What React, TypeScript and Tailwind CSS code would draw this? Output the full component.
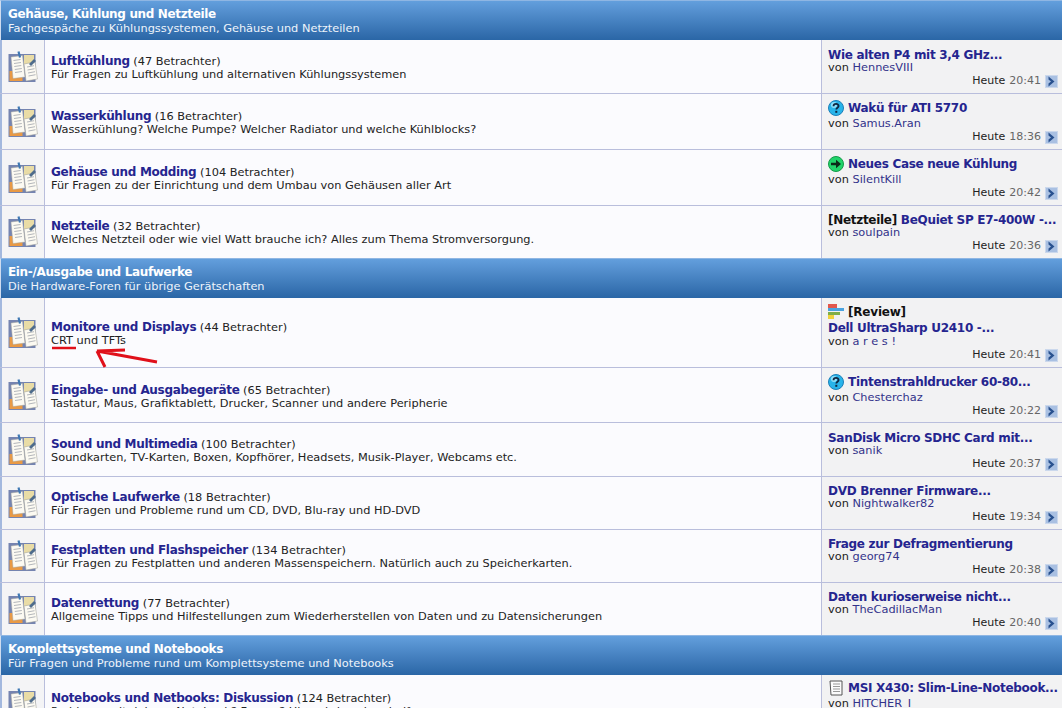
import React from 'react';

type Forum = {
  name: string;
  viewers: string;
  desc: string;
  marker?: 'question' | 'go' | 'poll' | 'doc';
  prefix?: string;
  title: string;
  by: string;
  time: string;
  height: string;
  tight?: boolean;
};

const ClipboardIcon = () => (
  <svg width="30" height="32" viewBox="0 0 30 32">
    <rect x="0.5" y="3" width="27" height="28" fill="#7584b0" />
    <rect x="1.5" y="20" width="13" height="10" fill="#e99a45" />
    <rect x="16" y="4" width="10" height="10" fill="#e9dca6" />
    <path d="M3 6L14.5 4.5L17 26L5 27.5Z" fill="#fcfaf2" stroke="#a5a59e" strokeWidth="0.5" />
    <path d="M16 13L27 11L29.5 28L18 30Z" fill="#fcfaf2" stroke="#9a9a92" strokeWidth="0.5" />
    <path d="M5.5 9.5l7-1M6 12.5l7-1M6.3 15.5l7-1M6.8 18.5l7-1M7 21.5l7-1M19 16l7-1.3M19.5 19l7-1.3M20 22l7-1.3M20.5 25l7-1.3" stroke="#b3b6bb" strokeWidth="1" />
    <path d="M10.5 0.5l1.5 6" stroke="#3f78b3" strokeWidth="2.2" />
    <path d="M21 13l5-5 2 2-5 5z" fill="#4f6c8c" />
  </svg>
);

const Marker = ({ type }: { type: Forum['marker'] }) => {
  if (type === 'question') {
    return (
      <svg width="16" height="16" viewBox="0 0 16 16" className="shrink-0">
        <circle cx="8" cy="8" r="7.5" fill="#28b4ea" stroke="#1c7fb8" />
        <circle cx="6" cy="5" r="3" fill="#8fe0fa" />
        <path d="M5.5 6.2C5.6 3.2 10.6 3.2 10.6 6C10.6 7.8 8.3 7.8 8.3 9.6" fill="none" stroke="#10253f" strokeWidth="1.8" />
        <rect x="7.3" y="10.8" width="2" height="2" fill="#10253f" />
      </svg>
    );
  }
  if (type === 'go') {
    return (
      <svg width="16" height="16" viewBox="0 0 16 16" className="shrink-0">
        <circle cx="8" cy="8" r="7.5" fill="#22d46a" stroke="#159a48" />
        <path d="M3 6.7h5V3.8L13 8l-5 4.2V9.3H3z" fill="#0b2a18" />
      </svg>
    );
  }
  if (type === 'poll') {
    return (
      <svg width="16" height="16" viewBox="0 0 16 16" className="shrink-0">
        <rect x="0" y="0" width="9" height="4" fill="#e2574c" />
        <rect x="0" y="4" width="16" height="3" fill="#4aa3df" />
        <rect x="0" y="8" width="12" height="3" fill="#7fae4a" />
        <rect x="0" y="11" width="6" height="4" fill="#f0d23c" />
      </svg>
    );
  }
  if (type === 'doc') {
    return (
      <svg width="16" height="16" viewBox="0 0 16 16" className="shrink-0">
        <path d="M2 1h12v14H3z" fill="#fbfbfb" stroke="#555" />
        <path d="M5 4h7M5 6.5h7M5 9h7M5 11.5h7" stroke="#999" />
      </svg>
    );
  }
  return null;
};

const GoButton = () => (
  <svg width="13" height="13" viewBox="0 0 13 13" className="ml-[4px] mt-[1px] shrink-0">
    <rect width="13" height="13" fill="#a9c0e2" />
    <rect x="0.5" y="0.5" width="12" height="12" fill="none" stroke="#cbd8ec" />
    <path d="M3.5 1.5L9.5 6.5L3.5 11.5V8.5L6 6.5L3.5 4.5Z" fill="#29518f" />
  </svg>
);

const Category = ({ title, sub }: { title: string; sub: string }) => (
  <div className="h-[40px] border-t border-t-[#8fb6e3] border-l border-l-[#cfdcef] bg-gradient-to-b from-[#639fdd] to-[#2a66a6] pl-[7px] pt-[6px] text-white">
    <div className="text-[12px] leading-[15px] font-bold tracking-[-0.35px]">{title}</div>
    <div className="text-[11.35px] leading-[13px] text-[#eef4fb]">{sub}</div>
  </div>
);

const Row = ({ f, last }: { f: Forum; last?: boolean }) => (
  <div className={`${f.height} flex ${last ? '' : 'border-b border-b-[#b9bedc]'}`}>
    <div className="w-[45px] shrink-0 flex items-center justify-center border-l-2 border-l-[#a3b8de] border-r border-r-[#b9bedc] bg-[#f4f4f6]">
      <ClipboardIcon />
    </div>
    <div className={`relative flex-1 flex flex-col justify-center bg-[#fbfbfe] pl-[6px] ${f.tight ? '' : 'pt-[2px]'}`}>
      <div className="leading-[14px] text-[11.35px] text-[#222]">
        <a className="text-[12px] font-bold tracking-[-0.3px] text-[#25258f]">{f.name}</a> ({f.viewers} Betrachter)
      </div>
      <div className="text-[11.35px] leading-[13px] text-[#222]">{f.desc}</div>
      {f.name === 'Monitore und Displays' && (
        <svg width="120" height="30" viewBox="0 0 120 30" className="absolute left-[6px] top-[46px]">
          <path d="M1 4h24" stroke="#e0101a" strokeWidth="2.5" />
          <path d="M106 18L46 7L74 6M46 7L54 23" fill="none" stroke="#e0101a" strokeWidth="3" />
        </svg>
      )}
    </div>
    <div className={`w-[241px] shrink-0 border-l border-l-[#b9bedc] bg-[#f2f2f3] pl-[6px] pr-[4px] text-[11.35px] text-[#222] ${f.marker === 'poll' ? 'pt-[5px]' : f.marker ? 'pt-[4px]' : f.tight ? 'pt-[7px]' : 'pt-[8px]'}`}>
      {f.marker === 'poll' ? (
        <>
          <div className="flex h-[17px] items-center gap-[4px] text-[12px] font-bold tracking-[-0.2px] text-[#111]">
            <Marker type={f.marker} />
            <span>{f.prefix}</span>
          </div>
          <div className="mt-[1px] text-[12px] font-bold leading-[14px] tracking-[-0.3px] whitespace-nowrap text-[#25258f]">{f.title}</div>
        </>
      ) : (
        <div className={`flex items-center gap-[4px] text-[12px] font-bold tracking-[-0.3px] whitespace-nowrap ${f.marker === 'doc' ? 'h-[18px]' : f.marker ? 'h-[19px]' : 'h-[13px]'}`}>
          <Marker type={f.marker} />
          {f.prefix && <span className="text-[#111]">{f.prefix}</span>}
          <span className="text-[#25258f]">{f.title}</span>
        </div>
      )}
      <div className="leading-[13px]">
        von <a className="text-[#33338a]">{f.by}</a>
      </div>
      <div className="flex items-start justify-end leading-[13px]">
        <span className="text-[11px]">Heute</span>
        <span className="ml-[4px] text-[11px] text-[#666]">{f.time}</span>
        <GoButton />
      </div>
    </div>
  </div>
);

const cooling: Forum[] = [
  { name: 'Luftkühlung', viewers: '47', desc: 'Für Fragen zu Luftkühlung und alternativen Kühlungssystemen', title: 'Wie alten P4 mit 3,4 GHz...', by: 'HennesVIII', time: '20:41', height: 'h-[54px]' },
  { name: 'Wasserkühlung', viewers: '16', desc: 'Wasserkühlung? Welche Pumpe? Welcher Radiator und welche Kühlblocks?', title: 'Wakü für ATI 5770', marker: 'question', by: 'Samus.Aran', time: '18:36', height: 'h-[56px]' },
  { name: 'Gehäuse und Modding', viewers: '104', desc: 'Für Fragen zu der Einrichtung und dem Umbau von Gehäusen aller Art', title: 'Neues Case neue Kühlung', marker: 'go', by: 'SilentKill', time: '20:42', height: 'h-[56px]' },
  { name: 'Netzteile', viewers: '32', desc: 'Welches Netzteil oder wie viel Watt brauche ich? Alles zum Thema Stromversorgung.', prefix: '[Netzteile]', title: 'BeQuiet SP E7-400W -...', by: 'soulpain', time: '20:36', height: 'h-[52px]', tight: true },
];

const drives: Forum[] = [
  { name: 'Monitore und Displays', viewers: '44', desc: 'CRT und TFTs', marker: 'poll', prefix: '[Review]', title: 'Dell UltraSharp U2410 -...', by: 'a r e s !', time: '20:41', height: 'h-[70px]' },
  { name: 'Eingabe- und Ausgabegeräte', viewers: '65', desc: 'Tastatur, Maus, Grafiktablett, Drucker, Scanner und andere Peripherie', title: 'Tintenstrahldrucker 60-80...', marker: 'question', by: 'Chesterchaz', time: '20:22', height: 'h-[55px]' },
  { name: 'Sound und Multimedia', viewers: '100', desc: 'Soundkarten, TV-Karten, Boxen, Kopfhörer, Headsets, Musik-Player, Webcams etc.', title: 'SanDisk Micro SDHC Card mit...', by: 'sanik', time: '20:37', height: 'h-[54px]' },
  { name: 'Optische Laufwerke', viewers: '18', desc: 'Für Fragen und Probleme rund um CD, DVD, Blu-ray und HD-DVD', title: 'DVD Brenner Firmware...', by: 'Nightwalker82', time: '19:34', height: 'h-[53px]', tight: true },
  { name: 'Festplatten und Flashspeicher', viewers: '134', desc: 'Für Fragen zu Festplatten und anderen Massenspeichern. Natürlich auch zu Speicherkarten.', title: 'Frage zur Defragmentierung', by: 'georg74', time: '20:38', height: 'h-[53px]', tight: true },
  { name: 'Datenrettung', viewers: '77', desc: 'Allgemeine Tipps und Hilfestellungen zum Wiederherstellen von Daten und zu Datensicherungen', title: 'Daten kurioserweise nicht...', by: 'TheCadillacMan', time: '20:40', height: 'h-[52px]', tight: true },
];

const notebooks: Forum[] = [
  { name: 'Notebooks und Netbooks: Diskussion', viewers: '124', desc: 'Probleme mit deinem Notebook? Fragen? Hier wird euch geholfen', marker: 'doc', title: 'MSI X430: Slim-Line-Notebook...', by: 'HITCHER_I', time: '20:41', height: 'h-[58px]' },
];

export default function App() {
  return (
    <div className="h-[708px] w-[1062px] overflow-hidden bg-white font-['DejaVu_Sans',sans-serif]">
      <Category title="Gehäuse, Kühlung und Netzteile" sub="Fachgespäche zu Kühlungssystemen, Gehäuse und Netzteilen" />
      {cooling.map((f, i) => (
        <Row key={f.name} f={f} last={i === cooling.length - 1} />
      ))}
      <Category title="Ein-/Ausgabe und Laufwerke" sub="Die Hardware-Foren für übrige Gerätschaften" />
      {drives.map((f, i) => (
        <Row key={f.name} f={f} last={i === drives.length - 1} />
      ))}
      <Category title="Komplettsysteme und Notebooks" sub="Für Fragen und Probleme rund um Komplettsysteme und Notebooks" />
      {notebooks.map((f) => (
        <Row key={f.name} f={f} />
      ))}
    </div>
  );
}
